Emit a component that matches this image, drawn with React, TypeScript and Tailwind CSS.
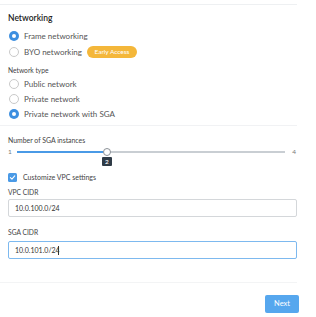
import { useState } from "react";

function Radio({ checked, label }: { checked?: boolean; label: string }) {
  return (
    <div className="flex h-[12px] items-center">
      <span
        className={
          checked
            ? "flex h-[10px] w-[10px] items-center justify-center rounded-full bg-[#3d8fe0]"
            : "h-[10px] w-[10px] rounded-full border border-[#c9c9c9] bg-white"
        }
      >
        {checked && <span className="h-[4px] w-[4px] rounded-full bg-white" />}
      </span>
      <span className="ml-[5px] text-[8px] text-[#555]">{label}</span>
    </div>
  );
}

export default function App() {
  const [vpc, setVpc] = useState("10.0.100.0/24");
  const [sga, setSga] = useState("10.0.101.0/24");

  return (
    <div
      className="h-[317px] w-[316px] bg-white text-[#333]"
      style={{ fontFamily: "Lato, 'Liberation Sans', sans-serif" }}
    >
      <div className="h-[4px]" />
      <div className="h-px w-[297px] bg-[#eef0f2]" />

      <div className="pl-[8px]">
        <div className="mt-[7px] flex h-[12px] items-center text-[8.5px] font-semibold text-[#222]">
          Networking
        </div>

        <div className="mt-[6px] pl-[1px]">
          <Radio checked label="Frame networking" />
        </div>
        <div className="mt-[4px] flex items-center pl-[1px]">
          <Radio label="BYO networking" />
          <span className="ml-[5px] flex h-[12px] w-[50px] items-center justify-center rounded-full bg-[#f4b73a] text-[6.5px] text-white">
            Early Access
          </span>
        </div>

        <div className="mt-[8px] flex h-[8px] items-center text-[6.7px] text-[#444]">
          Network type
        </div>
        <div className="mt-[4px] pl-[1px]">
          <Radio label="Public network" />
        </div>
        <div className="mt-[3px] pl-[1px]">
          <Radio label="Private network" />
        </div>
        <div className="mt-[3px] pl-[1px]">
          <Radio checked label="Private network with SGA" />
        </div>
      </div>

      <div className="mt-[5px] h-px w-[297px] bg-[#f1f2f4]" />

      <div className="pl-[8px]">
        <div className="mt-[10px] flex h-[8px] items-center text-[6.9px] text-[#444]">
          Number of SGA instances
        </div>

        <div className="mt-[3px] flex h-[10px] w-[289px] items-center">
          <span className="w-[9px] text-[6.5px] text-[#777]">1</span>
          <div className="relative h-[10px] flex-1">
            <div className="absolute left-0 right-0 top-[4px] h-[1.5px] bg-[#c9ced3]" />
            <div className="absolute left-0 top-[4px] h-[1.5px] w-[86px] bg-[#4a9ae6]" />
            <div className="absolute left-[86px] top-[1px] h-[8px] w-[8px] rounded-full border border-[#8a9096] bg-white" />
          </div>
          <span className="w-[12px] pr-[1px] text-right text-[6.5px] text-[#777]">4</span>
        </div>
        <div className="flex h-[9px] pl-[94px]">
          <span className="flex h-[9px] w-[10px] items-center justify-center rounded-[1px] bg-[#2f3b46] text-[6.5px] font-semibold text-white">
            2
          </span>
        </div>

        <div className="mt-[6px] flex h-[10px] items-center">
          <span className="flex h-[9px] w-[9px] items-center justify-center rounded-[1.5px] bg-[#4a9ae6]">
            <svg width="7" height="7" viewBox="0 0 10 10" fill="none">
              <path d="M2 5.2 L4.2 7.3 L8.2 2.8" stroke="white" strokeWidth="1.6" strokeLinecap="round" strokeLinejoin="round" />
            </svg>
          </span>
          <span className="ml-[6px] text-[7px] text-[#444]">Customize VPC settings</span>
        </div>

        <div className="mt-[6px] flex h-[8px] items-center text-[6.7px] text-[#444]">
          VPC CIDR
        </div>
        <input
          className="mt-[3px] block h-[18px] w-[289px] rounded-[2px] border border-[#d4d7da] bg-white pl-[6px] text-[7px] text-[#333] outline-none"
          value={vpc}
          onChange={(e) => setVpc(e.target.value)}
        />

        <div className="mt-[11px] flex h-[8px] items-center text-[6.7px] text-[#444]">
          SGA CIDR
        </div>
        <div className="mt-[5px] flex h-[18px] w-[289px] items-center rounded-[2px] border border-[#7db9ef] bg-white pl-[6px]">
          <input
            className="w-[46px] bg-transparent text-[7px] text-[#333] outline-none"
            value={sga}
            onChange={(e) => setSga(e.target.value)}
          />
          <span className="-ml-[3px] h-[9px] w-px bg-[#333]" />
        </div>
      </div>

      <div className="mt-[23px] h-px w-[297px] bg-[#f3f4f5]" />

      <div className="mt-[12px] flex w-[299px] justify-end">
        <button className="flex h-[18px] w-[34px] items-center justify-center rounded-[2px] bg-[#56a7ee] text-[7.5px] text-white">
          Next
        </button>
      </div>
    </div>
  );
}
